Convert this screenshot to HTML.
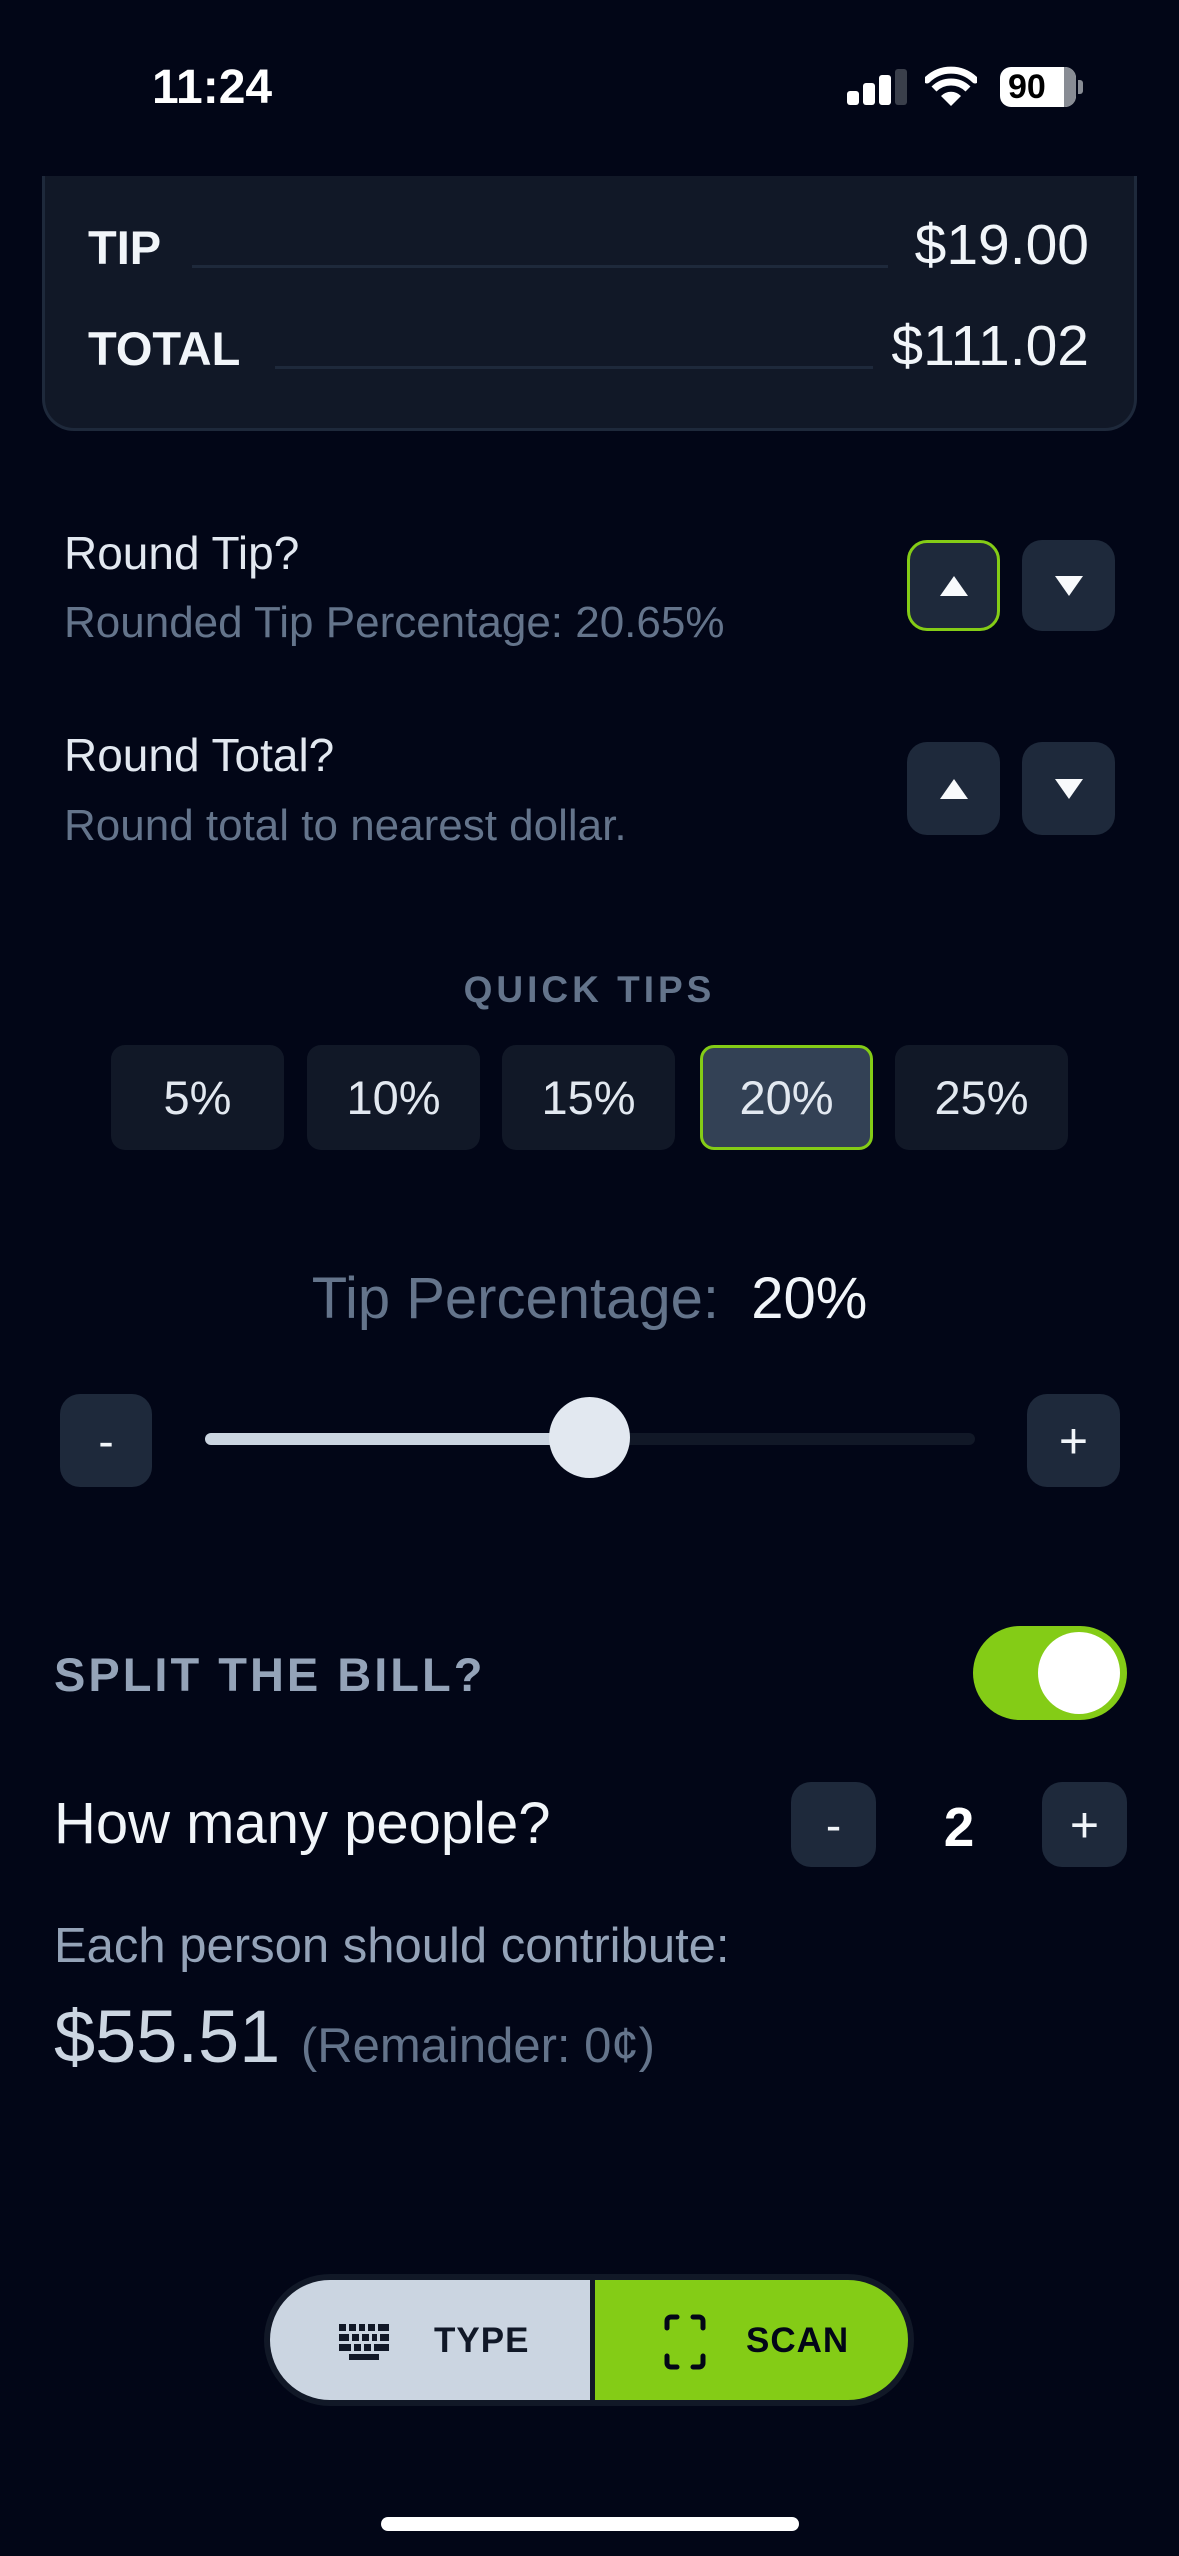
<!DOCTYPE html>
<html><head><meta charset="utf-8"><style>
*{margin:0;padding:0;box-sizing:border-box}
body{width:1179px;height:2556px;background:#020617;font-family:"Liberation Sans",sans-serif;color:#e2e8f0;position:relative;overflow:hidden}
.a{position:absolute}
.t{position:absolute;white-space:nowrap;line-height:1}
.btn{position:absolute;background:#1e293b;border-radius:20px;display:flex;align-items:center;justify-content:center;color:#f1f5f9}
.chip{position:absolute;top:1045px;width:173px;height:105px;background:#111827;border-radius:14px;display:flex;align-items:center;justify-content:center;font-size:47px;color:#e2e8f0}
</style></head><body>
<div class="t" style="left:152px;top:64px;font-size:48px;font-weight:bold;color:#fff">11:24</div>
<div class="a" style="left:847px;top:91px;width:12px;height:14px;background:#fff;border-radius:3px"></div>
<div class="a" style="left:863px;top:83px;width:12px;height:22px;background:#fff;border-radius:3px"></div>
<div class="a" style="left:879px;top:75px;width:12px;height:30px;background:#fff;border-radius:3px"></div>
<div class="a" style="left:895px;top:69px;width:12px;height:36px;background:#3a3f4b;border-radius:3px"></div>
<svg class="a" style="left:925px;top:66px" width="52" height="40" viewBox="0 0 52 40"><path d="M26 40 L16 30 A14 14 0 0 1 36 30 Z" fill="#fff"/><path d="M9 23 A24 24 0 0 1 43 23" stroke="#fff" stroke-width="7" fill="none"/><path d="M2 14 A34 34 0 0 1 50 14" stroke="#fff" stroke-width="7" fill="none" stroke-linecap="round"/></svg>
<div class="a" style="left:1000px;top:67px;width:76px;height:40px;background:#fff;border-radius:11px;color:#000;font-weight:bold;font-size:34px;line-height:40px;padding-left:8px">90</div>
<div class="a" style="left:1064px;top:67px;width:12px;height:40px;background:#888c94;border-radius:0 11px 11px 0"></div>
<div class="a" style="left:1078px;top:80px;width:5px;height:14px;background:#888c94;border-radius:0 3px 3px 0"></div>

<div class="a" style="left:42px;top:176px;width:1095px;height:255px;background:#111827;border:3px solid #1e293b;border-top:none;border-radius:0 0 32px 32px"></div>
<div class="t" style="left:88px;top:224px;font-size:47px;font-weight:bold;color:#f1f5f9">TIP</div>
<div class="a" style="left:192px;top:265px;width:696px;height:3px;background:#1e293b"></div>
<div class="t" style="right:90px;top:217px;font-size:57px;color:#f1f5f9">$19.00</div>
<div class="t" style="left:88px;top:325px;font-size:47px;font-weight:bold;color:#f1f5f9">TOTAL</div>
<div class="a" style="left:275px;top:366px;width:598px;height:3px;background:#1e293b"></div>
<div class="t" style="right:90px;top:318px;font-size:57px;color:#f1f5f9">$111.02</div>

<div class="t" style="left:64px;top:530px;font-size:46px;color:#e2e8f0">Round Tip?</div>
<div class="t" style="left:64px;top:601px;font-size:44px;color:#64748b">Rounded Tip Percentage: 20.65%</div>
<div class="btn" style="left:907px;top:540px;width:93px;height:91px;border:3px solid #84cc16"><svg width="30" height="24"><path d="M15 2 L29 22 H1Z" fill="#f8fafc"/></svg></div>
<div class="btn" style="left:1022px;top:540px;width:93px;height:91px"><svg width="30" height="24"><path d="M15 22 L29 2 H1Z" fill="#f8fafc"/></svg></div>
<div class="t" style="left:64px;top:732px;font-size:46px;color:#e2e8f0">Round Total?</div>
<div class="t" style="left:64px;top:804px;font-size:44px;color:#64748b">Round total to nearest dollar.</div>
<div class="btn" style="left:907px;top:742px;width:93px;height:93px"><svg width="30" height="24"><path d="M15 2 L29 22 H1Z" fill="#f8fafc"/></svg></div>
<div class="btn" style="left:1022px;top:742px;width:93px;height:93px"><svg width="30" height="24"><path d="M15 22 L29 2 H1Z" fill="#f8fafc"/></svg></div>

<div class="t" style="left:0;width:1179px;text-align:center;top:971px;font-size:37px;font-weight:bold;letter-spacing:4px;color:#64748b">QUICK TIPS</div>
<div class="chip" style="left:111px">5%</div>
<div class="chip" style="left:307px">10%</div>
<div class="chip" style="left:502px">15%</div>
<div class="chip" style="left:700px;background:#334155;border:3px solid #84cc16">20%</div>
<div class="chip" style="left:895px">25%</div>

<div class="t" style="left:0;width:1179px;text-align:center;top:1270px;font-size:58px;color:#64748b">Tip Percentage:&nbsp; <span style="color:#f1f5f9">20%</span></div>
<div class="btn" style="left:60px;top:1394px;width:92px;height:93px;font-size:46px">-</div>
<div class="btn" style="left:1027px;top:1394px;width:93px;height:93px;font-size:50px">+</div>
<div class="a" style="left:205px;top:1433px;width:770px;height:12px;background:#111827;border-radius:6px"></div>
<div class="a" style="left:205px;top:1433px;width:390px;height:12px;background:#cbd5e1;border-radius:6px"></div>
<div class="a" style="left:549px;top:1397px;width:81px;height:81px;background:#e2e8f0;border-radius:50%"></div>

<div class="t" style="left:54px;top:1651px;font-size:47px;font-weight:bold;letter-spacing:3px;color:#94a3b8">SPLIT THE BILL?</div>
<div class="a" style="left:973px;top:1626px;width:154px;height:94px;background:#84cc16;border-radius:47px"></div>
<div class="a" style="left:1038px;top:1632px;width:82px;height:82px;background:#fff;border-radius:50%"></div>

<div class="t" style="left:54px;top:1795px;font-size:58px;color:#f1f5f9">How many people?</div>
<div class="btn" style="left:791px;top:1782px;width:85px;height:85px;font-size:46px">-</div>
<div class="t" style="left:900px;width:118px;text-align:center;top:1800px;font-size:55px;font-weight:bold;color:#fff">2</div>
<div class="btn" style="left:1042px;top:1782px;width:85px;height:85px;font-size:50px">+</div>
<div class="t" style="left:54px;top:1922px;font-size:49px;color:#94a3b8">Each person should contribute:</div>
<div class="t" style="left:54px;top:2000px;font-size:74px;color:#cbd5e1">$55.51 <span style="font-size:49px;color:#64748b">(Remainder: 0¢)</span></div>

<div class="a" style="left:264px;top:2274px;width:650px;height:132px;background:#111827;border-radius:66px"></div>
<div class="a" style="left:270px;top:2280px;width:320px;height:120px;background:#cbd5e1;border-radius:60px 0 0 60px"></div>
<div class="a" style="left:595px;top:2280px;width:313px;height:120px;background:#84cc16;border-radius:0 60px 60px 0"></div>
<svg class="a" style="left:338px;top:2323px" width="52" height="38" viewBox="0 0 52 38" fill="#111827"><g><rect x="1" y="1" width="7" height="7"/><rect x="11" y="1" width="7" height="7"/><rect x="21" y="1" width="6" height="7"/><rect x="30" y="1" width="7" height="7"/><rect x="40" y="1" width="11" height="7"/><rect x="1" y="11" width="10" height="7"/><rect x="14" y="11" width="7" height="7"/><rect x="24" y="11" width="7" height="7"/><rect x="34" y="11" width="5" height="7"/><rect x="42" y="11" width="9" height="7"/><rect x="1" y="21" width="12" height="7"/><rect x="16" y="21" width="7" height="7"/><rect x="26" y="21" width="7" height="7"/><rect x="36" y="21" width="15" height="7"/><rect x="11" y="31" width="30" height="6"/></g></svg>
<div class="t" style="left:434px;top:2323px;font-size:35px;font-weight:bold;letter-spacing:1px;color:#111827">TYPE</div>
<svg class="a" style="left:664px;top:2314px" width="42" height="56" viewBox="0 0 42 56" fill="none" stroke="#020617" stroke-width="5" stroke-linecap="round"><path d="M3 14 V7 A4 4 0 0 1 7 3 H13"/><path d="M29 3 H35 A4 4 0 0 1 39 7 V14"/><path d="M3 42 V49 A4 4 0 0 0 7 53 H13"/><path d="M29 53 H35 A4 4 0 0 0 39 49 V42"/></svg>
<div class="t" style="left:746px;top:2323px;font-size:35px;font-weight:bold;letter-spacing:1px;color:#020617">SCAN</div>

<div class="a" style="left:381px;top:2517px;width:418px;height:14px;background:#fff;border-radius:7px"></div>
</body></html>
